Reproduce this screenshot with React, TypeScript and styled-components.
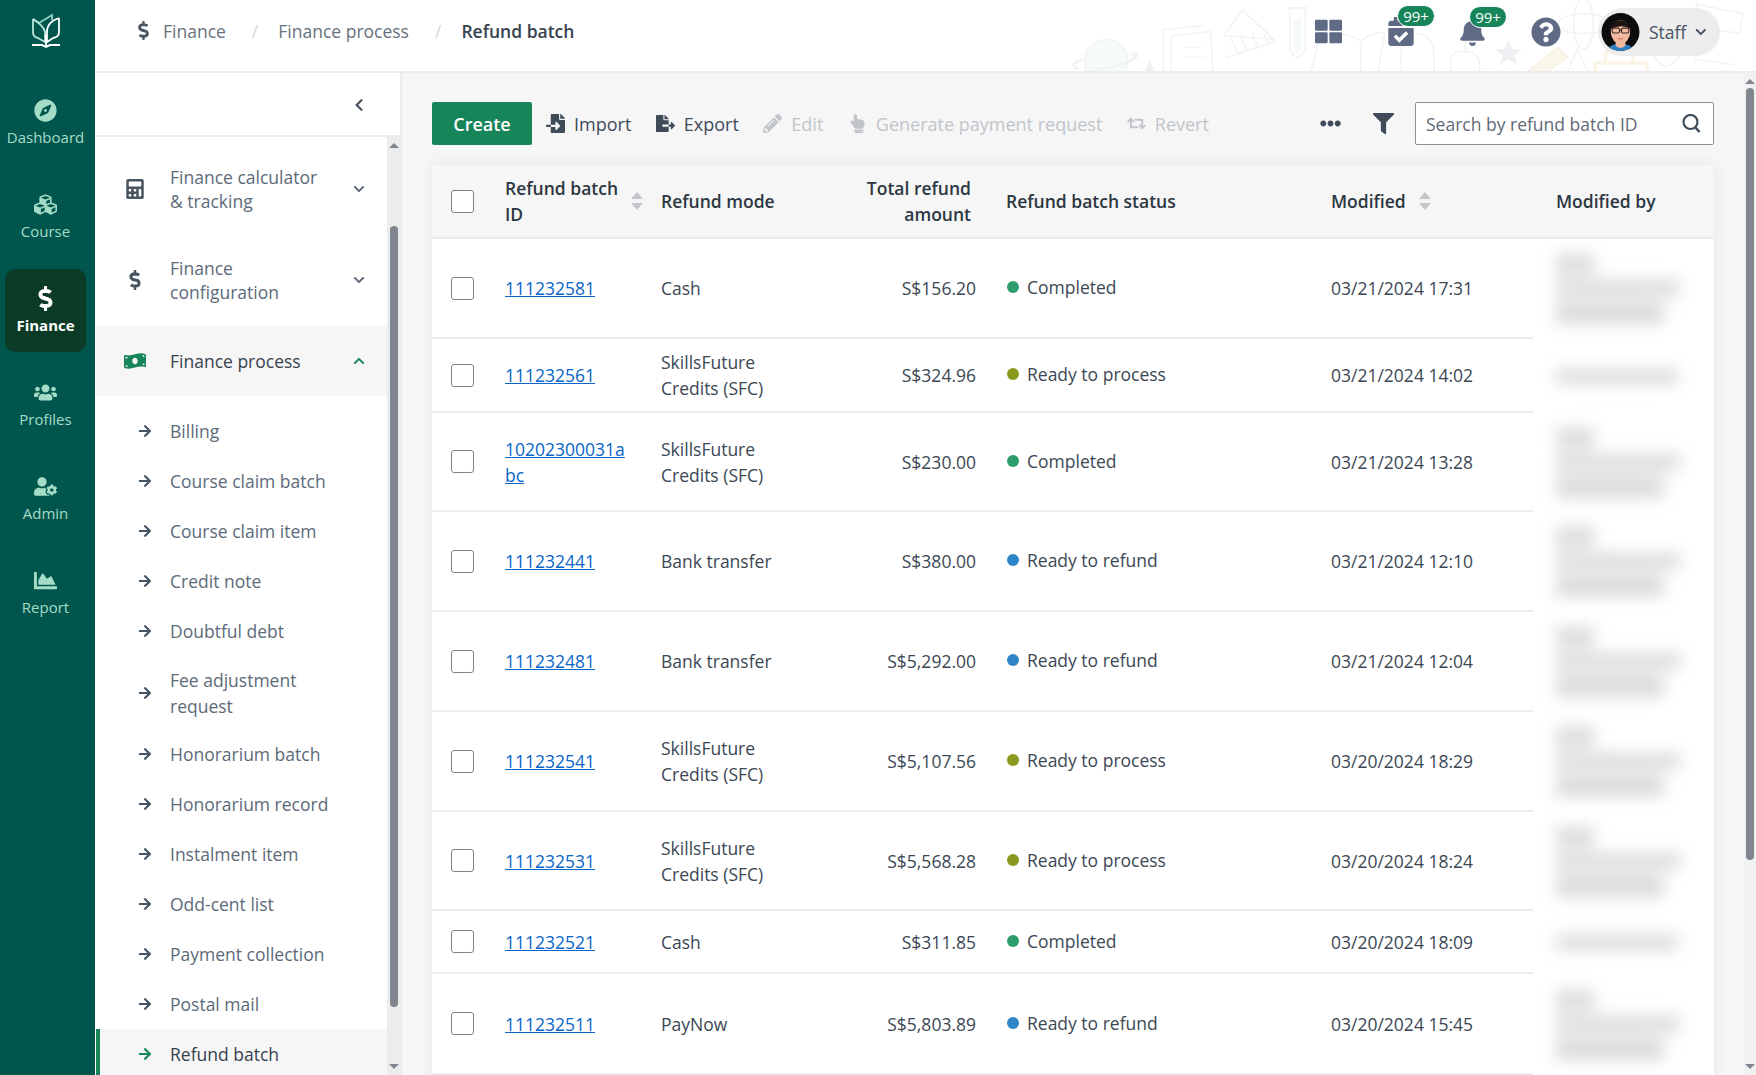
import React from 'react'
import styled, { createGlobalStyle } from 'styled-components'
import {
  FaArrowRight,
  FaBell,
  FaCalculator,
  FaCalendarCheck,
  FaChartArea,
  FaChevronDown,
  FaChevronLeft,
  FaChevronUp,
  FaCompass,
  FaCubes,
  FaDollarSign,
  FaEllipsisH,
  FaFileExport,
  FaFileImport,
  FaFilter,
  FaHandPointUp,
  FaMoneyBillWave,
  FaPencilAlt,
  FaQuestionCircle,
  FaRetweet,
  FaThLarge,
  FaUserCog,
  FaUsers,
} from 'react-icons/fa'

type Status = 'Completed' | 'Ready to process' | 'Ready to refund'

const statusColor: Record<Status, string> = {
  Completed: '#2f9e6e',
  'Ready to process': '#8b9a1f',
  'Ready to refund': '#2f86c6',
}

const rows: {
  id: string
  mode: string
  amount: string
  status: Status
  modified: string
  height: number
  short?: boolean
}[] = [
  { id: '111232581', mode: 'Cash', amount: 'S$156.20', status: 'Completed', modified: '03/21/2024 17:31', height: 100 },
  { id: '111232561', mode: 'SkillsFuture Credits (SFC)', amount: 'S$324.96', status: 'Ready to process', modified: '03/21/2024 14:02', height: 74, short: true },
  { id: '10202300031abc', mode: 'SkillsFuture Credits (SFC)', amount: 'S$230.00', status: 'Completed', modified: '03/21/2024 13:28', height: 99 },
  { id: '111232441', mode: 'Bank transfer', amount: 'S$380.00', status: 'Ready to refund', modified: '03/21/2024 12:10', height: 100 },
  { id: '111232481', mode: 'Bank transfer', amount: 'S$5,292.00', status: 'Ready to refund', modified: '03/21/2024 12:04', height: 100 },
  { id: '111232541', mode: 'SkillsFuture Credits (SFC)', amount: 'S$5,107.56', status: 'Ready to process', modified: '03/20/2024 18:29', height: 100 },
  { id: '111232531', mode: 'SkillsFuture Credits (SFC)', amount: 'S$5,568.28', status: 'Ready to process', modified: '03/20/2024 18:24', height: 99 },
  { id: '111232521', mode: 'Cash', amount: 'S$311.85', status: 'Completed', modified: '03/20/2024 18:09', height: 63, short: true },
  { id: '111232511', mode: 'PayNow', amount: 'S$5,803.89', status: 'Ready to refund', modified: '03/20/2024 15:45', height: 101 },
]

const railItems = [
  { label: 'Dashboard', icon: <FaCompass /> },
  { label: 'Course', icon: <FaCubes /> },
  { label: 'Finance', icon: <FaDollarSign />, active: true },
  { label: 'Profiles', icon: <FaUsers /> },
  { label: 'Admin', icon: <FaUserCog /> },
  { label: 'Report', icon: <FaChartArea /> },
]

const subItems = [
  'Billing',
  'Course claim batch',
  'Course claim item',
  'Credit note',
  'Doubtful debt',
  'Fee adjustment request',
  'Honorarium batch',
  'Honorarium record',
  'Instalment item',
  'Odd-cent list',
  'Payment collection',
  'Postal mail',
  'Refund batch',
]

function Logo() {
  return (
    <svg width="32" height="38" viewBox="0 0 32 38" fill="none" strokeWidth="1.8">
      <path d="M3 7 L9 11 L22 3 V8" stroke="#8fd0c4" />
      <path d="M3 7 V20 Q3 25 8 26 L15 30 V20 Q14 14 3 7" stroke="#b9e4dc" />
      <path d="M29 6 V20 Q29 25 23 26 L17 30 V20 Q17 10 29 6" stroke="#fff" />
      <path d="M16 22 V34" stroke="#fff" />
      <path d="M2 33 H12 L16 35 L20 33 H30" stroke="#fff" strokeWidth="2" />
    </svg>
  )
}

function Avatar() {
  return (
    <svg width="40" height="40" viewBox="0 0 40 40">
      <clipPath id="avatar-clip">
        <circle cx="20" cy="20" r="19.5" />
      </clipPath>
      <g clipPath="url(#avatar-clip)">
        <rect width="40" height="40" fill="#0c0c0e" />
        <path d="M6 40 Q8 32 20 32 Q32 32 34 40 Z" fill="#2f7fc0" />
        <path d="M15 27 H25 V34 Q20 39 15 34 Z" fill="#f0b9a0" />
        <ellipse cx="20" cy="20" rx="10" ry="12" fill="#f0b9a0" />
        <path d="M9.5 17 Q12 8 20 8 Q28 8 30.5 17 Q22 11 9.5 17 Z" fill="#1c1210" />
        <rect x="11.5" y="16" width="7.5" height="5" rx="1.5" fill="none" stroke="#3d2a24" strokeWidth="1.2" />
        <rect x="21" y="16" width="7.5" height="5" rx="1.5" fill="none" stroke="#3d2a24" strokeWidth="1.2" />
        <path d="M19 18 H21" stroke="#3d2a24" strokeWidth="1.2" />
        <path d="M17 26.5 Q20 28 23 26.5" fill="none" stroke="#c4705f" strokeWidth="1" />
      </g>
    </svg>
  )
}

function Doodles() {
  return (
    <DoodleArt viewBox="0 0 696 72" fill="none" stroke="#f1f3f4" strokeWidth="1.6">
      <circle cx="42" cy="62" r="22" fill="#f8fbfb" />
      <path d="M18 60 Q2 66 14 70 M66 56 Q76 52 72 58 Q60 68 30 70" strokeWidth="3" />
      <path d="M81 72 L86 60 L91 72" fill="#eff0f3" stroke="none" />
      <path d="M100 30 L142 26 M108 36 L148 32 L150 72 M108 36 V72 M100 30 V72" />
      <path d="M122 48 H140 M122 58 H142" strokeWidth="1" />
      <path d="M162 36 L180 10 L212 40 Z" />
      <path d="M168 38 L176 54 M178 36 L186 52 M190 34 L196 50 M202 34 L206 46 M164 58 L214 42" />
      <path d="M226 8 H246 M228 8 V50 Q236 66 244 50 V8" />
      <path d="M232 20 H240 V50 Q236 58 232 50 Z" fill="#f4faf9" stroke="none" />
      <path d="M250 72 L258 38 Q285 30 300 42 Q316 30 324 34 L318 72 M300 42 V72" />
      <path d="M342 72 Q336 36 358 34 Q378 36 374 72" />
      <path d="M392 72 Q386 52 404 52 Q424 52 420 72 M406 52 V38" />
      <path d="M450 40 L454 50 L464 50 L456 56 L459 66 L450 60 L441 66 L444 56 L436 50 L446 50 Z" fill="#eff0f3" stroke="none" />
      <path d="M470 72 L500 48 L510 58 L490 72" fill="#fbf6ea" stroke="#f7f2e6" />
      <path d="M510 72 L520 50 L530 72" />
      <ellipse cx="526" cy="24" rx="10" ry="26" />
      <ellipse cx="526" cy="24" rx="26" ry="10" />
      <path d="M548 64 V60 Q548 46 562 46 Q576 46 576 60 V64 M538 72 V64 H590 V72" stroke="#fbf5e8" strokeWidth="4" />
      <path d="M592 48 Q598 38 610 48 Q622 38 628 50 Q626 58 610 68 Q594 58 592 48 Z" />
      <path d="M640 4 L688 14 L684 34 L646 28 Z M640 30 V60 L680 66" />
    </DoodleArt>
  )
}

function SortArrows() {
  return (
    <SortIcon viewBox="0 0 12 18" width="12" height="18">
      <path d="M6 0 L12 7 H0 Z" />
      <path d="M6 18 L12 11 H0 Z" />
    </SortIcon>
  )
}

function SearchGlyph() {
  return (
    <svg width="19" height="19" viewBox="0 0 19 19" fill="none" stroke="currentColor" strokeWidth="2.2">
      <circle cx="8.5" cy="8" r="7" />
      <path d="M13 13 L17.5 18" strokeWidth="2.6" />
    </svg>
  )
}

function BlurredName({ short }: { short?: boolean }) {
  if (short) {
    return (
      <BlurStack>
        <BlurBar $width={122} $height={15} />
      </BlurStack>
    )
  }
  return (
    <BlurStack>
      <BlurBar $width={38} $height={20} />
      <BlurBar $width={124} $height={16} />
      <BlurBar $width={108} $height={22} />
    </BlurStack>
  )
}

function App() {
  return (
    <Page>
      <GlobalStyle />
      <Rail>
        <LogoBlock>
          <Logo />
        </LogoBlock>
        {railItems.map((item) => (
          <RailItem key={item.label} $active={item.active}>
            <RailIcon $active={item.active}>{item.icon}</RailIcon>
            <span>{item.label}</span>
          </RailItem>
        ))}
      </Rail>
      <Right>
        <Header>
          <Doodles />
          <Crumbs>
            <CrumbIcon>
              <FaDollarSign />
            </CrumbIcon>
            <Crumb>Finance</Crumb>
            <CrumbSep>/</CrumbSep>
            <Crumb>Finance process</Crumb>
            <CrumbSep>/</CrumbSep>
            <Crumb $current>Refund batch</Crumb>
          </Crumbs>
          <HeaderTools>
            <HeaderIcon $width={27} $size={27}>
              <FaThLarge />
            </HeaderIcon>
            <HeaderIcon $width={26} $size={29}>
              <FaCalendarCheck />
              <Badge>99+</Badge>
            </HeaderIcon>
            <HeaderIcon $width={25} $size={28}>
              <FaBell />
              <Badge>99+</Badge>
            </HeaderIcon>
            <HeaderIcon $width={30} $size={30}>
              <FaQuestionCircle />
            </HeaderIcon>
            <UserPill>
              <Avatar />
              <span>Staff</span>
              <FaChevronDown size={12} />
            </UserPill>
          </HeaderTools>
        </Header>
        <Body>
          <SidePanel>
            <CollapseRow>
              <FaChevronLeft size={14} />
            </CollapseRow>
            <MenuWrap>
              <Menu>
                <SectionItem $height={89}>
                  <SectionIcon>
                    <FaCalculator />
                  </SectionIcon>
                  <SectionLabel>
                    Finance calculator
                    <br />& tracking
                  </SectionLabel>
                  <FaChevronDown size={12} />
                </SectionItem>
                <SectionItem $height={93}>
                  <SectionIcon>
                    <FaDollarSign />
                  </SectionIcon>
                  <SectionLabel>
                    Finance
                    <br />
                    configuration
                  </SectionLabel>
                  <FaChevronDown size={12} />
                </SectionItem>
                <SectionItem $height={70} $open>
                  <SectionIcon $open>
                    <FaMoneyBillWave />
                  </SectionIcon>
                  <SectionLabel>Finance process</SectionLabel>
                  <OpenChevron>
                    <FaChevronUp size={12} />
                  </OpenChevron>
                </SectionItem>
                <SubList>
                  {subItems.map((label) => (
                    <SubItem key={label} $active={label === 'Refund batch'}>
                      <FaArrowRight size={14} />
                      <span>{label === 'Fee adjustment request' ? <>Fee adjustment<br />request</> : label}</span>
                    </SubItem>
                  ))}
                </SubList>
              </Menu>
              <ScrollTrack>
                <ScrollArrow $dir="up" />
                <ScrollThumb $top={78} $height={781} />
                <ScrollFill />
                <ScrollArrow $dir="down" />
              </ScrollTrack>
            </MenuWrap>
          </SidePanel>
          <Content>
            <Toolbar>
              <CreateButton>Create</CreateButton>
              <Actions>
                <Action>
                  <FaFileImport />
                  Import
                </Action>
                <Action>
                  <FaFileExport />
                  Export
                </Action>
                <Action $disabled>
                  <FaPencilAlt />
                  Edit
                </Action>
                <Action $disabled>
                  <FaHandPointUp />
                  Generate payment request
                </Action>
                <Action $disabled>
                  <FaRetweet />
                  Revert
                </Action>
              </Actions>
              <ToolsRight>
                <DotsIcon>
                  <FaEllipsisH />
                </DotsIcon>
                <FilterIcon>
                  <FaFilter />
                </FilterIcon>
                <SearchBox>
                  <SearchInput placeholder="Search by refund batch ID" readOnly />
                  <SearchGlyph />
                </SearchBox>
              </ToolsRight>
            </Toolbar>
            <Table>
              <colgroup>
                <col width={57} />
                <col width={156} />
                <col width={175} />
                <col width={170} />
                <col width={325} />
                <col width={218} />
                <col width={181} />
              </colgroup>
              <thead>
                <tr>
                  <HeadCell>
                    <Check />
                  </HeadCell>
                  <HeadCell>
                    <SortHead>
                      <NoWrap>
                        Refund batch
                        <br />
                        ID
                      </NoWrap>
                      <SortArrows />
                    </SortHead>
                  </HeadCell>
                  <HeadCell>Refund mode</HeadCell>
                  <HeadCell $right>
                    Total refund
                    <br />
                    amount
                  </HeadCell>
                  <HeadCell>Refund batch status</HeadCell>
                  <HeadCell>
                    <SortHead>
                      <NoWrap>Modified</NoWrap>
                      <SortArrows />
                    </SortHead>
                  </HeadCell>
                  <LastHeadCell>Modified by</LastHeadCell>
                </tr>
              </thead>
              <tbody>
                {rows.map((row) => (
                  <Row key={row.id} $height={row.height}>
                    <Cell>
                      <Check />
                    </Cell>
                    <IdCell>
                      <BatchLink href="#">{row.id}</BatchLink>
                    </IdCell>
                    <ModeCell>{row.mode}</ModeCell>
                    <AmountCell>{row.amount}</AmountCell>
                    <Cell>
                      <StatusWrap>
                        <Dot $color={statusColor[row.status]} />
                        {row.status}
                      </StatusWrap>
                    </Cell>
                    <Cell>{row.modified}</Cell>
                    <BlurCell>
                      <BlurredName short={row.short} />
                    </BlurCell>
                  </Row>
                ))}
                <Row $height={60}>
                  <td colSpan={7} />
                </Row>
              </tbody>
            </Table>
          </Content>
          <PageScroll>
            <ScrollArrow $dir="up" />
            <ScrollThumb $top={4} $height={772} />
            <ScrollFill />
            <ScrollArrow $dir="down" />
          </PageScroll>
        </Body>
      </Right>
    </Page>
  )
}

export default App

const GlobalStyle = createGlobalStyle`
  html, body {
    margin: 0;
    height: 100%;
    overflow: hidden;
    background: #fff;
  }
  body {
    font-family: "Open Sans", "Noto Sans", sans-serif;
    font-size: 17.5px;
    line-height: 26px;
    color: #3b4754;
  }
  * {
    box-sizing: border-box;
  }
`
const Page = styled.div`
  display: flex;
  height: 100vh;
  overflow: hidden;
`
const Rail = styled.aside`
  width: 95px;
  flex: none;
  padding-right: 4px;
  background: #00564d;
  display: flex;
  flex-direction: column;
  align-items: center;
  gap: 11px;
`
const LogoBlock = styled.div`
  height: 70px;
  padding-top: 12px;
  align-self: stretch;
  display: flex;
  justify-content: center;
  align-items: flex-start;
`
const RailItem = styled.div<{ $active?: boolean }>`
  width: 81px;
  height: 83px;
  padding-top: 16px;
  border-radius: 10px;
  display: flex;
  flex-direction: column;
  align-items: center;
  font-size: 15px;
  line-height: 20px;
  color: ${(p) => (p.$active ? '#fff' : '#a5dcc8')};
  font-weight: ${(p) => (p.$active ? 700 : 400)};
  background: ${(p) => (p.$active ? '#0b3a27' : 'transparent')};
`
const RailIcon = styled.div<{ $active?: boolean }>`
  height: 26px;
  margin-bottom: 4px;
  display: flex;
  align-items: center;
  font-size: ${(p) => (p.$active ? '25px' : '23px')};
`
const Right = styled.div`
  flex: 1;
  min-width: 0;
  display: flex;
  flex-direction: column;
`
const Header = styled.header`
  position: relative;
  height: 73px;
  flex: none;
  display: flex;
  align-items: center;
  padding: 0 36px 10px 39px;
  border-bottom: 2px solid #ececec;
  background: #fff;
`
const DoodleArt = styled.svg`
  position: absolute;
  right: 0;
  top: 0;
  width: 696px;
  height: 71px;
`
const Crumbs = styled.nav`
  position: relative;
  display: flex;
  align-items: center;
`
const CrumbIcon = styled.span`
  display: flex;
  font-size: 19px;
  color: #4a5562;
  margin-right: 10px;
`
const Crumb = styled.span<{ $current?: boolean }>`
  color: ${(p) => (p.$current ? '#36424f' : '#66717d')};
  font-weight: ${(p) => (p.$current ? 600 : 400)};
`
const CrumbSep = styled.span`
  margin: 0 20px 0 26px;
  color: #d5d8db;
`
const HeaderTools = styled.div`
  position: relative;
  top: 1px;
  margin-left: auto;
  display: flex;
  align-items: center;
  gap: 46px;
`
const HeaderIcon = styled.div<{ $width: number; $size: number }>`
  position: relative;
  width: ${(p) => p.$width}px;
  display: flex;
  justify-content: center;
  color: #5f6a84;
  font-size: ${(p) => p.$size}px;
`
const Badge = styled.span`
  position: absolute;
  left: 9px;
  top: -12px;
  width: 38px;
  height: 22px;
  border-radius: 11px;
  border: 1px solid #fff;
  background: #17855a;
  color: #fff;
  font-size: 15px;
  line-height: 20px;
  text-align: center;
`
const UserPill = styled.div`
  width: 122px;
  display: flex;
  align-items: center;
  gap: 9px;
  height: 48px;
  padding: 0 13px 0 3px;
  margin-left: -9px;
  border-radius: 24px;
  background: rgba(232, 232, 234, 0.8);
  color: #46525f;
`
const Body = styled.div`
  flex: 1;
  min-height: 0;
  display: flex;
`
const SidePanel = styled.div`
  width: 306px;
  flex: none;
  margin-left: 1px;
  display: flex;
  flex-direction: column;
  border-right: 2px solid #ececec;
  background: #fff;
`
const CollapseRow = styled.div`
  height: 64px;
  flex: none;
  padding-top: 2px;
  display: flex;
  align-items: center;
  justify-content: flex-end;
  padding-right: 34px;
  border-bottom: 2px solid #ececec;
  color: #4a5562;
`
const MenuWrap = styled.div`
  flex: 1;
  min-height: 0;
  display: flex;
`
const Menu = styled.nav`
  flex: 1;
  min-width: 0;
  overflow: hidden;
  padding-top: 7px;
`
const SectionItem = styled.div<{ $height: number; $open?: boolean }>`
  height: ${(p) => p.$height}px;
  padding: 0 22px 0 27px;
  display: flex;
  align-items: center;
  line-height: 24px;
  background: ${(p) => (p.$open ? '#f6f6f6' : 'transparent')};
  color: ${(p) => (p.$open ? '#36424f' : '#5c6a79')};
`
const SectionIcon = styled.span<{ $open?: boolean }>`
  width: 24px;
  margin-right: 23px;
  display: flex;
  justify-content: center;
  font-size: ${(p) => (p.$open ? '22px' : '20px')};
  color: ${(p) => (p.$open ? '#17855a' : '#4a5562')};
`
const SectionLabel = styled.span`
  flex: 1;
`
const OpenChevron = styled.span`
  display: flex;
  color: #17855a;
`
const SubList = styled.div`
  padding-top: 10px;
`
const SubItem = styled.div<{ $active?: boolean }>`
  min-height: 50px;
  padding: 10.5px 10px 10.5px 38px;
  display: flex;
  align-items: center;
  gap: 18px;
  border-left: 4px solid ${(p) => (p.$active ? '#17855a' : 'transparent')};
  background: ${(p) => (p.$active ? '#f6f6f6' : 'transparent')};
  color: ${(p) => (p.$active ? '#36424f' : '#5c6a79')};
  svg {
    flex: none;
    color: ${(p) => (p.$active ? '#17855a' : '#465464')};
  }
`
const ScrollTrack = styled.div`
  width: 13px;
  flex: none;
  display: flex;
  flex-direction: column;
  align-items: center;
  background: #ebecec;
`
const PageScroll = styled(ScrollTrack)`
  width: 12px;
  background: #f1f1f1;
`
const ScrollArrow = styled.span<{ $dir: 'up' | 'down' }>`
  flex: none;
  margin: ${(p) => (p.$dir === 'up' ? '6px 0 0' : '0 0 6px')};
  border-left: 5px solid transparent;
  border-right: 5px solid transparent;
  ${(p) => (p.$dir === 'up' ? 'border-bottom: 5px solid #80868e;' : 'border-top: 5px solid #80868e;')}
`
const ScrollThumb = styled.span<{ $top: number; $height: number }>`
  flex: none;
  width: 8px;
  margin-top: ${(p) => p.$top}px;
  height: ${(p) => p.$height}px;
  border-radius: 4px;
  background: #80868e;
`
const ScrollFill = styled.span`
  flex: 1;
`
const Content = styled.main`
  flex: 1;
  min-width: 0;
  overflow: hidden;
  padding: 29px 30px 0;
  background: #f6f6f6;
`
const Toolbar = styled.div`
  display: flex;
  align-items: center;
  height: 43px;
  margin-bottom: 20px;
  font-size: 18px;
`
const CreateButton = styled.button`
  width: 100px;
  height: 43px;
  border: 0;
  border-radius: 2px;
  background: #17855a;
  color: #fff;
  font: 600 18px "Open Sans", sans-serif;
`
const Actions = styled.div`
  display: flex;
  align-items: center;
  gap: 24.5px;
  margin-left: 14px;
`
const Action = styled.span<{ $disabled?: boolean }>`
  display: flex;
  align-items: center;
  gap: 9px;
  color: ${(p) => (p.$disabled ? '#c1c5ca' : '#3f4b59')};
  svg {
    font-size: 19px;
  }
`
const ToolsRight = styled.div`
  margin-left: auto;
  display: flex;
  align-items: center;
`
const DotsIcon = styled.span`
  display: flex;
  font-size: 21px;
  color: #3f4b59;
  margin-right: 32px;
`
const FilterIcon = styled.span`
  display: flex;
  font-size: 21px;
  color: #3f4b59;
  margin-right: 21px;
`
const SearchBox = styled.div`
  width: 299px;
  height: 43px;
  display: flex;
  align-items: center;
  padding: 0 12px 0 10px;
  border: 1px solid #8b929a;
  border-radius: 2px;
  background: #fff;
  color: #3f4b59;
`
const SearchInput = styled.input`
  flex: 1;
  min-width: 0;
  border: 0;
  outline: 0;
  padding: 0;
  background: transparent;
  font: 17.5px "Open Sans", sans-serif;
  color: #3f4b59;
  &::placeholder {
    color: #5f6a76;
    opacity: 1;
  }
`
const Table = styled.table`
  width: 1282px;
  table-layout: fixed;
  border-collapse: separate;
  border-spacing: 0;
  background: #fff;
  box-shadow: 0 0 14px rgba(0, 0, 0, 0.07);
`
const HeadCell = styled.th<{ $right?: boolean }>`
  height: 74px;
  padding: 0 ${(p) => (p.$right ? '19px' : '16px')} 0 16px;
  text-align: ${(p) => (p.$right ? 'right' : 'left')};
  font-weight: 600;
  color: #2c3742;
  background: #f6f6f6;
  border-bottom: 2px solid #ececec;
  &:first-child {
    padding: 0 0 0 19px;
  }
`
const LastHeadCell = styled(HeadCell)`
  padding-left: 23px;
`
const SortHead = styled.div`
  display: flex;
  align-items: center;
  gap: 13px;
`
const NoWrap = styled.span`
  white-space: nowrap;
`
const SortIcon = styled.svg`
  flex: none;
  fill: #c3c7cb;
`
const Row = styled.tr<{ $height: number }>`
  height: ${(p) => p.$height}px;
`
const Cell = styled.td`
  padding: 0 16px;
  vertical-align: middle;
  border-bottom: 2px solid #ececec;
  color: #3b4754;
  &:first-child {
    padding: 0 0 0 19px;
  }
`
const IdCell = styled(Cell)`
  word-break: break-all;
`
const ModeCell = styled(Cell)`
  padding-right: 30px;
`
const AmountCell = styled(Cell)`
  padding-right: 14px;
  text-align: right;
`
const BlurCell = styled(Cell)`
  border-bottom: 0;
  padding: 0 0 0 23px;
`
const Check = styled.span`
  display: block;
  width: 23px;
  height: 23px;
  border: 1px solid #7c838b;
  border-radius: 3px;
  background: #fff;
`
const BatchLink = styled.a`
  color: #0a66c8;
  text-decoration: underline;
`
const StatusWrap = styled.span`
  display: flex;
  align-items: center;
  gap: 8px;
  position: relative;
  top: -1px;
  padding-left: 1px;
`
const Dot = styled.i<{ $color: string }>`
  width: 12px;
  height: 12px;
  border-radius: 50%;
  background: ${(p) => p.$color};
`
const BlurStack = styled.div`
  display: flex;
  flex-direction: column;
  gap: 6px;
  filter: blur(8px);
`
const BlurBar = styled.div<{ $width: number; $height: number }>`
  width: ${(p) => p.$width}px;
  height: ${(p) => p.$height}px;
  background: #d9dbdd;
`
